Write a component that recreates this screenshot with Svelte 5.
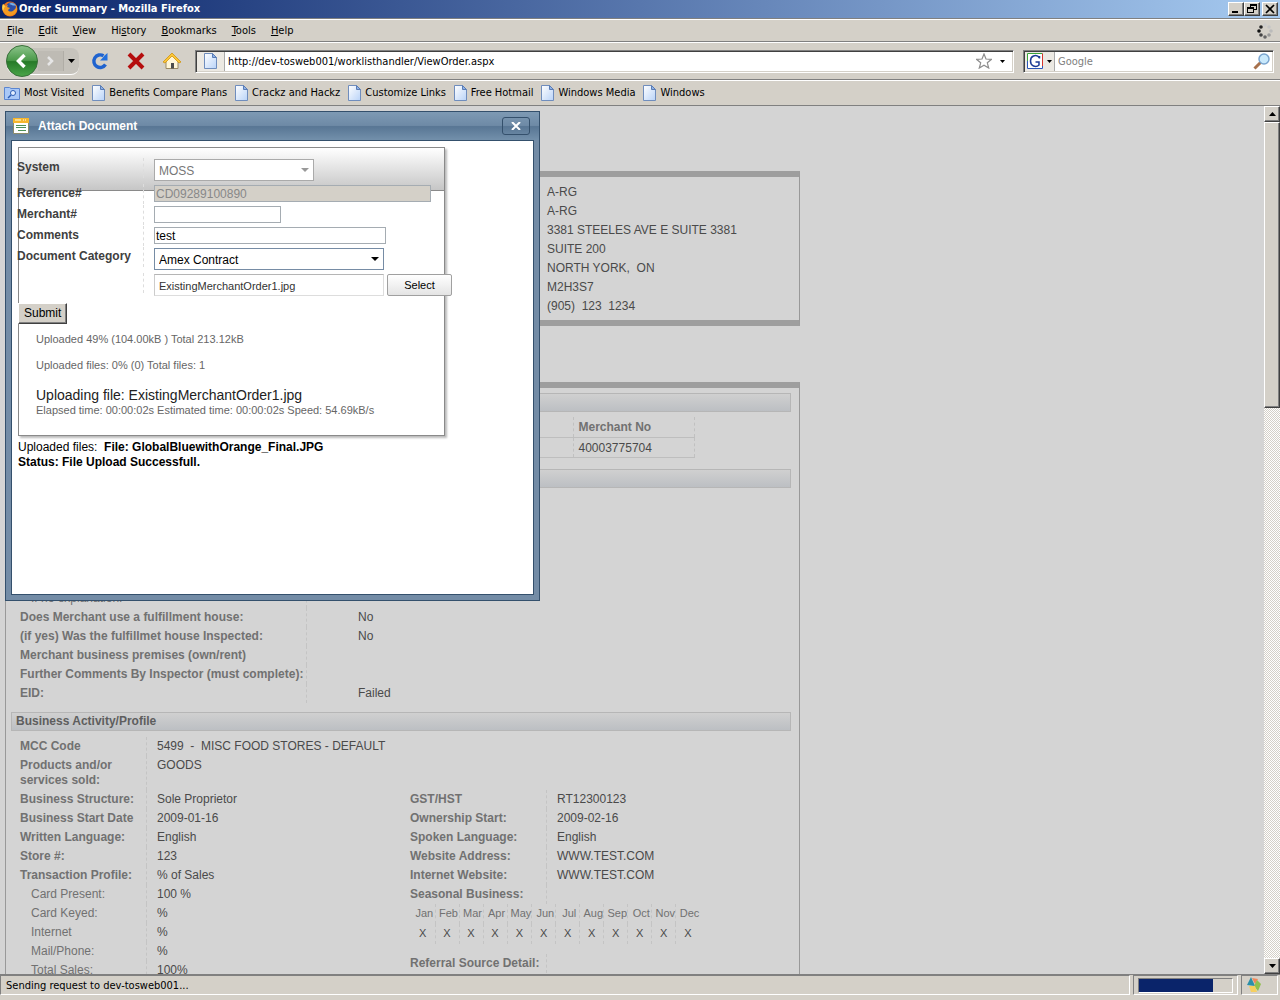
<script>
    const menus = ['File', 'Edit', 'View', 'History', 'Bookmarks', 'Tools', 'Help']
    // index of the underlined accelerator letter
    const accel = [0, 0, 0, 2, 0, 0, 0]
    const bookmarks = ['Benefits Compare Plans', 'Crackz and Hackz', 'Customize Links', 'Free Hotmail', 'Windows Media', 'Windows']
    const address = ['A-RG', 'A-RG', '3381 STEELES AVE E SUITE 3381', 'SUITE 200', 'NORTH YORK,\u00a0 ON', 'M2H3S7', '(905)\u00a0 123\u00a0 1234']
    const inspection = [
        { label: 'If no explanation:', value: '', sub: true },
        { label: 'Does Merchant use a fulfillment house:', value: 'No' },
        { label: '(if yes) Was the fulfillmet house Inspected:', value: 'No' },
        { label: 'Merchant business premises (own/rent)', value: '' },
        { label: 'Further Comments By Inspector (must complete):', value: '' },
        { label: 'EID:', value: 'Failed' }
    ]
    const activity = [
        { label: 'MCC Code', value: '5499\u00a0 -\u00a0 MISC FOOD STORES - DEFAULT' },
        { label: 'Products and/or services sold:', value: 'GOODS' }
    ]
    const business = [
        { label: 'Business Structure:', value: 'Sole Proprietor' },
        { label: 'Business Start Date', value: '2009-01-16' },
        { label: 'Written Language:', value: 'English' },
        { label: 'Store #:', value: '123' },
        { label: 'Transaction Profile:', value: '% of Sales' },
        { label: 'Card Present:', value: '100 %', sub: true },
        { label: 'Card Keyed:', value: '%', sub: true },
        { label: 'Internet', value: '%', sub: true },
        { label: 'Mail/Phone:', value: '%', sub: true },
        { label: 'Total Sales:', value: '100%', sub: true }
    ]
    const ownership = [
        { label: 'GST/HST', value: 'RT12300123' },
        { label: 'Ownership Start:', value: '2009-02-16' },
        { label: 'Spoken Language:', value: 'English' },
        { label: 'Website Address:', value: 'WWW.TEST.COM' },
        { label: 'Internet Website:', value: 'WWW.TEST.COM' },
        { label: 'Seasonal Business:', value: '' }
    ]
    const referral = [{ label: 'Referral Source Detail:', value: '' }]
    const months = ['Jan', 'Feb', 'Mar', 'Apr', 'May', 'Jun', 'Jul', 'Aug', 'Sep', 'Oct', 'Nov', 'Dec']
    const dots = [
        [5, 3, '#222'], [3, 7, '#111'], [5, 11, '#444'], [9, 13, '#666'],
        [13, 11, '#999'], [15, 7, '#bbb'], [13, 3, '#c4c4c4'], [9, 1, '#ccc']
    ]

    let reference = 'CD09289100890'
    let merchant = ''
    let comments = 'test'
    let file = 'ExistingMerchantOrder1.jpg'
    let progress = 80
    let open = true
</script>

{#snippet pageIcon()}
    <svg class="page-icon" width="13" height="16" viewBox="0 0 13 16">
        <defs>
            <linearGradient id="sheet" x1="0" y1="0" x2="1" y2="1">
                <stop offset="0" stop-color="#fff" />
                <stop offset="1" stop-color="#b9d3f8" />
            </linearGradient>
        </defs>
        <path d="M.5.5h8l4 4v11H.5z" fill="url(#sheet)" stroke="#6f8dbd" />
        <path d="M8.5.5v4h4z" fill="#8fb2e8" stroke="#5a7cb4" />
    </svg>
{/snippet}

{#snippet fields(rows)}
    {#each rows as row}
        <div class="row">
            <dt class:sub={row.sub}>{row.label}</dt>
            <dd>{row.value}</dd>
        </div>
    {/each}
{/snippet}

<div class="window">
    <header class="titlebar">
        <svg width="16" height="16" viewBox="0 0 16 16">
            <circle cx="8" cy="8" r="7.500" fill="#e8701a" />
            <circle cx="9" cy="6.500" r="5" fill="#2c4fa8" />
            <path d="M7 3c2-2 6-1 7 2-2-1-3 0-4-1z" fill="#79b4ea" />
            <path d="M1 3l2 2 3-1-1 2 3 1-2 2c1 2 4 2 6 0 2-1 2-3 2-5 2 4 1 8-3 10s-8 0-10-4c-1-2-1-5 0-7z" fill="#f39a22" />
            <path d="M1 3l2 2-2 5c-1-2-1-5 0-7z" fill="#ffd34d" />
        </svg>
        <h1>Order Summary - Mozilla Firefox</h1>
        <div class="winbtns">
            <button aria-label="Minimize"><svg width="12" height="10"><path d="M2 7h6v2H2z" /></svg></button>
            <button aria-label="Restore">
                <svg width="12" height="10"><path d="M4 0h7v6H8v3H1V3h3zM5 2v1h3v2h2V2zM2 5v3h5V5z" fill-rule="evenodd" /></svg>
            </button>
            <button aria-label="Close" class="close"><svg width="12" height="10"><path d="M2 1l8 8M10 1L2 9" stroke="#000" stroke-width="1.700" /></svg></button>
        </div>
    </header>

    <nav class="menubar">
        {#each menus as menu, i}
            <button>{menu.slice(0, accel[i])}<u>{menu[accel[i]]}</u>{menu.slice(accel[i] + 1)}</button>
        {/each}
        <svg class="throbber" width="18" height="16">
            {#each dots as [x, y, fill]}
                <circle cx={x} cy={y + 1} r="1.800" {fill} />
            {/each}
        </svg>
    </nav>

    <div class="toolbar">
        <div class="history">
            <button class="back" aria-label="Back">
                <svg width="32" height="32" viewBox="0 0 32 32">
                    <defs>
                        <linearGradient id="green" x1="0" y1="0" x2="0" y2="1">
                            <stop offset="0" stop-color="#8cc48b" />
                            <stop offset=".48" stop-color="#4b9a4a" />
                            <stop offset=".52" stop-color="#267a28" />
                            <stop offset="1" stop-color="#4aa548" />
                        </linearGradient>
                    </defs>
                    <circle cx="16" cy="16" r="15.500" fill="url(#green)" stroke="#39703a" />
                    <path d="M18.500 10l-6 6 6 6" fill="none" stroke="#fff" stroke-width="3.500" />
                </svg>
            </button>
            <button class="forward" aria-label="Forward">
                <svg width="14" height="14"><path d="M4 3l4 4-4 4" fill="none" stroke="#e6e6e6" stroke-width="2.500" /></svg>
            </button>
            <button class="recent" aria-label="Recent pages"><svg width="7" height="4"><path d="M0 0h7L3.500 4z" /></svg></button>
        </div>
        <button class="tool" aria-label="Reload">
            <svg width="18" height="18" viewBox="0 0 18 18">
                <path d="M14.500 12.500A6.300 6.300 0 1 1 12.500 3.800" fill="none" stroke="#1f63cf" stroke-width="3.400" />
                <path d="M16.500 1v7.500H9l2.500-2.500 2-2.500z" fill="#2270de" />
            </svg>
        </button>
        <button class="tool" aria-label="Stop">
            <svg width="18" height="18" viewBox="0 0 18 18"><path d="M2 2l14 14M16 2L2 16" stroke="#b50d0d" stroke-width="4" /></svg>
        </button>
        <button class="tool" aria-label="Home">
            <svg width="18" height="18" viewBox="0 0 18 18">
                <path d="M3 9l6-6 6 6v7.500H3z" fill="#fff6d8" stroke="#9b8a63" />
                <path d="M0 10L9 1l9 9-2 1-7-7-7 7z" fill="#fbc638" stroke="#cf9310" stroke-width=".8" />
                <path d="M8 11h3v5.500H8z" fill="#4d4d4d" />
            </svg>
        </button>
        <div class="location">
            <span class="favicon">{@render pageIcon()}</span>
            <input aria-label="Location" value="http://dev-tosweb001/worklisthandler/ViewOrder.aspx" />
            <button aria-label="Bookmark this page">
                <svg width="16" height="16" viewBox="0 0 16 16">
                    <path d="M8 1l2 5 5.500.3-4.200 3.500 1.400 5.200L8 12.200 3.300 15l1.400-5.200L.5 6.300 6 6z" fill="#fff" stroke="#8d8d8d" stroke-width="1.200" />
                </svg>
            </button>
            <button aria-label="Show history"><svg width="5" height="3"><path d="M0 0h5L2.500 3z" /></svg></button>
        </div>
        <div class="search">
            <button class="engine" aria-label="Search engine">
                <svg width="16" height="16" viewBox="0 0 16 16">
                    <path d="M0 0h16v16H0z" fill="#fff" />
                    <path d="M.5 8V.5h15" fill="none" stroke="#3aa53a" />
                    <path d="M15.500.5V13" stroke="#d6352b" />
                    <path d="M.5 8v7.500h15V13" fill="none" stroke="#2a55b8" />
                    <path d="M12.500 5.500V3M12.500 5C11 2.500 8.500 2.300 6.500 3 2.500 4.500 2.500 11.500 6.500 13c2 .7 4.500 0 5.500-1V9H8.500" fill="none" stroke="#1b3a94" stroke-width="1.500" />
                </svg>
                <svg width="5" height="3"><path d="M0 0h5L2.500 3z" /></svg>
            </button>
            <input aria-label="Search" placeholder="Google" />
            <button aria-label="Go">
                <svg width="18" height="18" viewBox="0 0 18 18">
                    <path d="M7.500 10.500l-6 6" stroke="#a7714d" stroke-width="3" />
                    <circle cx="11" cy="7" r="5" fill="#c9e9fc" stroke="#7aa5cf" stroke-width="1.500" />
                </svg>
            </button>
        </div>
    </div>

    <nav class="bookmarks">
        <a href="#most-visited">
            <svg width="16" height="14" viewBox="0 0 16 14">
                <path d="M.5 1.500h5l1.500 1h8.500v11H.5z" fill="#a9c8f7" stroke="#5c86cf" />
                <circle cx="9" cy="7" r="2.500" fill="#e5f0ff" stroke="#2c5db4" />
                <path d="M7 9l-3 3" stroke="#2c5db4" stroke-width="1.500" />
            </svg>
            Most Visited
        </a>
        {#each bookmarks as name}
            <a href="#bookmark">{@render pageIcon()}{name}</a>
        {/each}
    </nav>

    <div class="viewport">
        <main>
            <section class="panel address">
                {#each address as line}
                    <p>{line}</p>
                {/each}
            </section>

            <section class="panel">
                <div class="bar"></div>
                <table class="merchant">
                    <thead><tr><th class="wide"></th><th>Merchant No</th></tr></thead>
                    <tbody><tr><td class="wide"></td><td>40003775704</td></tr></tbody>
                </table>
                <div class="bar"></div>
                <dl class="inspection">{@render fields(inspection)}</dl>
                <h2 class="bar">Business Activity/Profile</h2>
                <dl class="activity">{@render fields(activity)}</dl>
                <div class="columns">
                    <dl>{@render fields(business)}</dl>
                    <div>
                        <dl>{@render fields(ownership)}</dl>
                        <table class="months">
                            <thead><tr>{#each months as month}<th>{month}</th>{/each}</tr></thead>
                            <tbody><tr>{#each months as month}<td>X</td>{/each}</tr></tbody>
                        </table>
                        <dl>{@render fields(referral)}</dl>
                    </div>
                </div>
            </section>

            {#if open}
                <div class="dialog" role="dialog" aria-labelledby="dialog-title">
                    <div class="dialog-title">
                        <svg width="16" height="16" viewBox="0 0 16 16">
                            <path d="M.5.5h15v15H.5z" fill="#fff" stroke="#8b8b6a" />
                            <path d="M0 0h16v5H0z" fill="#f6b62c" />
                            <path d="M2 2h6" stroke="#ffe9a8" stroke-width="1.500" />
                            <path d="M10 2h1m1 0h1" stroke="#fff" />
                            <path d="M3 7.500h10M3 9.500h10M5 12.500h8" stroke="#4d9156" />
                        </svg>
                        <h2 id="dialog-title">Attach Document</h2>
                        <button aria-label="Close" on:click={() => (open = false)}>
                            <svg width="10" height="8"><path d="M1 0l8 8M9 0L1 8" stroke="#fff" stroke-width="2" /></svg>
                        </button>
                    </div>
                    <div class="dialog-body">
                        <form on:submit|preventDefault>
                            <div class="field tall">
                                <label for="system">System</label>
                                <span class="select off w160">
                                    <select id="system" disabled><option>MOSS</option></select>
                                </span>
                            </div>
                            <div class="field">
                                <label for="reference">Reference#</label>
                                <input class="w277" id="reference" disabled bind:value={reference} />
                            </div>
                            <div class="field">
                                <label for="merchant">Merchant#</label>
                                <input class="w127" id="merchant" bind:value={merchant} />
                            </div>
                            <div class="field">
                                <label for="comments">Comments</label>
                                <input class="w232" id="comments" bind:value={comments} />
                            </div>
                            <div class="field tall">
                                <label for="category">Document Category</label>
                                <span class="select w230">
                                    <select id="category"><option>Amex Contract</option></select>
                                </span>
                            </div>
                            <div class="field tall">
                                <label for="file"></label>
                                <input class="file w230" id="file" aria-label="File" readonly value={file} />
                                <button class="pick" type="button">Select</button>
                            </div>
                            <button class="submit">Submit</button>
                            <div class="upload">
                                <p>Uploaded 49% (104.00kB ) Total 213.12kB</p>
                                <p>Uploaded files: 0% (0) Total files: 1</p>
                                <p class="current">Uploading file: {file}</p>
                                <p>Elapsed time: 00:00:02s Estimated time: 00:00:02s Speed: 54.69kB/s</p>
                            </div>
                        </form>
                        <p class="result">Uploaded files: &nbsp;<b>File: GlobalBluewithOrange_Final.JPG<br />Status: File Upload Successfull.</b></p>
                    </div>
                </div>
            {/if}
        </main>

        <div class="scrollbar">
            <button aria-label="Scroll up"><svg width="7" height="4"><path d="M0 4h7L3.500 0z" /></svg></button>
            <div class="thumb"></div>
            <button aria-label="Scroll down"><svg width="7" height="4"><path d="M0 0h7L3.500 4z" /></svg></button>
        </div>
    </div>

    <footer class="statusbar">
        <span class="message">Sending request to dev-tosweb001...</span>
        <span class="cell"><span class="progress"><span style="width: {progress}%"></span></span></span>
        <span class="cell last">
            <svg width="16" height="16" viewBox="0 0 16 16">
                <path d="M5 0l4 9-8-1z" fill="#2b8fa8" />
                <path d="M6 1l6 1-3 5z" fill="#f0875a" />
                <path d="M11 3l4 4-3 7-4-5z" fill="#8fc04e" />
                <path d="M3 9l6 0 2 6-6 0z" fill="#f6cf5e" />
            </svg>
        </span>
    </footer>
</div>

<style>
    :global(body) {
        margin: 0;
        background: #d4d0c8;
    }
    .window {
        display: flex;
        flex-direction: column;
        height: 100vh;
        overflow: hidden;
        background: #d4d0c8;
        color: #000;
        font: 11px/14px 'DejaVu Sans Condensed', 'DejaVu Sans', sans-serif;
    }
    h1, h2, p, dl, dd {
        margin: 0;
        font-size: inherit;
    }
    button, input, select {
        box-sizing: border-box;
        margin: 0;
        padding: 0;
        border: 0;
        border-radius: 0;
        background: none;
        color: inherit;
        font: inherit;
        outline: none;
    }
    button {
        display: flex;
        align-items: center;
        justify-content: center;
    }
    svg {
        display: block;
        flex: none;
    }

    /* browser chrome */
    .titlebar {
        display: flex;
        align-items: center;
        gap: 1px;
        height: 18px;
        padding: 0 2px;
        background: linear-gradient(90deg, #0a246a, #a6caf0);
        border-bottom: 1px solid #808080;
        color: #fff;
    }
    .titlebar h1 {
        flex: 1;
    }
    .winbtns {
        display: flex;
    }
    .winbtns button, .scrollbar button, .thumb {
        box-sizing: border-box;
        background: #d4d0c8;
        border: 1px solid;
        border-color: #fff #404040 #404040 #fff;
        box-shadow: inset -1px -1px #808080;
    }
    .winbtns button {
        width: 16px;
        height: 14px;
    }
    .winbtns .close {
        margin-left: 2px;
    }
    .menubar {
        display: flex;
        align-items: center;
        gap: 15px;
        height: 21px;
        padding: 0 6px 0 7px;
        border-top: 1px solid #fff;
        border-bottom: 1px solid #808080;
    }
    .menubar button {
        display: block;
    }
    .throbber {
        margin-left: auto;
    }
    .toolbar {
        display: flex;
        align-items: center;
        height: 36px;
        padding: 0 6px;
        border-top: 1px solid #fff;
        border-bottom: 1px solid #808080;
    }
    .history {
        display: flex;
        align-items: center;
        height: 26px;
        margin-right: 12px;
        border-bottom: 1px solid #fff;
        border-radius: 12px 8px 8px 12px;
        background: #c6c3bc;
    }
    .forward {
        width: 26px;
        height: 20px;
        border-right: 1px solid #b0ada6;
        background: #bebbb4;
    }
    .recent {
        width: 15px;
        height: 20px;
    }
    .tool {
        width: 18px;
        margin-right: 18px;
    }
    .location, .search {
        display: flex;
        align-items: center;
        box-sizing: border-box;
        height: 23px;
        border: 1px solid;
        border-color: #808080 #fff #fff #808080;
        box-shadow: inset 1px 1px #404040, inset -1px -1px #d4d0c8;
        background: #fff;
    }
    .location {
        flex: 1;
        margin: 0 9px 0 -4px;
    }
    .location input, .search input {
        flex: 1;
        min-width: 0;
        padding: 2px 0 0 3px;
    }
    .location button {
        margin-right: 8px;
    }
    .search {
        width: 251px;
    }
    .search button {
        margin-right: 2px;
    }
    .search input::placeholder {
        color: #808080;
        opacity: 1;
    }
    .favicon, .search .engine {
        display: flex;
        align-items: center;
        justify-content: center;
        gap: 4px;
        box-sizing: border-box;
        width: 28px;
        height: 19px;
        margin: 0 0 0 1px;
        border-right: 1px solid #aaa;
        background: #ece9e3;
    }
    .search .engine {
        width: 30px;
    }
    .bookmarks {
        display: flex;
        align-items: center;
        gap: 8px;
        height: 24px;
        padding-left: 4px;
        border-top: 1px solid #fff;
        border-bottom: 1px solid #808080;
    }
    .bookmarks a {
        display: flex;
        align-items: center;
        gap: 4px;
        color: #000;
        text-decoration: none;
    }

    /* page */
    .viewport {
        display: flex;
        flex: 1;
        min-height: 0;
    }
    main {
        position: relative;
        flex: 1;
        box-sizing: border-box;
        padding: 65px 5px 0;
        overflow: hidden;
        background: #d4d4d4;
        color: #4a4a4a;
        font: 12px/15px 'Liberation Sans', Arial, sans-serif;
    }
    .panel {
        box-sizing: border-box;
        max-width: 795px;
        margin-bottom: 56px;
        padding: 5px 8px 5px 5px;
        border: 1px solid #999;
        border-top: 6px solid #9e9e9e;
    }
    .address {
        padding: 6px 8px 4px 541px;
        border-bottom: 6px solid #9e9e9e;
    }
    .address p {
        padding: 2px 0;
    }
    .bar {
        box-sizing: border-box;
        height: 19px;
        padding: 1px 4px;
        border: 1px solid #b6b6b6;
        background: linear-gradient(#d0d0d0, #bcbfc3);
        color: #5e5e5e;
    }
    table {
        border-collapse: collapse;
    }
    th {
        color: #717171;
        text-align: left;
    }
    .merchant {
        margin: 5px 0 11px 9px;
    }
    .merchant th, .merchant td {
        box-sizing: border-box;
        width: 121px;
        height: 20px;
        padding: 2px 5px 0;
        border-right: 1px dashed #c0c0c0;
        border-bottom: 1px solid #bebebe;
    }
    .merchant .wide {
        width: 553px;
    }
    dl {
        padding-left: 9px;
    }
    .row {
        display: flex;
    }
    dt {
        box-sizing: border-box;
        width: 127px;
        padding: 2px 8px 2px 0;
        border-right: 1px dashed #c4c4c4;
        color: #717171;
        font-weight: bold;
    }
    dt.sub {
        padding-left: 11px;
        font-weight: normal;
    }
    dd {
        padding: 2px 10px;
    }
    .inspection {
        margin: 101px 0 9px;
    }
    .inspection dt {
        width: 287px;
        padding-right: 0;
        white-space: nowrap;
    }
    .inspection dd {
        padding-left: 51px;
    }
    .activity {
        margin-top: 6px;
    }
    .columns {
        display: flex;
    }
    .columns > dl {
        box-sizing: border-box;
        width: 390px;
    }
    .columns div dt {
        width: 137px;
        padding-right: 0;
    }
    .columns > dl dt {
        width: 127px;
    }
    .months {
        margin: 0 0 10px 10px;
        font-size: 11px;
    }
    .months th, .months td {
        box-sizing: border-box;
        width: 24px;
        min-width: 24px;
        height: 20px;
        padding: 0;
        border-right: 1px dashed #c4c4c4;
        font-weight: normal;
        text-align: center;
    }
    .months th {
        padding-left: 3px;
    }
    .months th:last-child, .months td:last-child {
        border-right: 0;
    }

    /* dialog */
    .dialog {
        position: absolute;
        top: 5px;
        left: 5px;
        display: flex;
        flex-direction: column;
        box-sizing: border-box;
        width: 535px;
        height: 490px;
        padding: 0 5px 5px;
        border: 1px solid #34506c;
        background: #738ca6;
        color: #000;
    }
    .dialog-title {
        display: flex;
        align-items: center;
        gap: 9px;
        height: 28px;
        margin: 0 -5px;
        padding: 0 9px 0 7px;
        background: linear-gradient(#7e9ab4, #6e8aa6 48%, #587694 52%, #7390ab);
        color: #fff;
    }
    .dialog-title h2 {
        flex: 1;
    }
    .dialog-title button {
        width: 28px;
        height: 18px;
        border: 1px solid #34506c;
        border-radius: 3px;
    }
    .dialog-body {
        flex: 1;
        padding: 6px;
        border: 1px solid #34506c;
        background: #fff;
    }
    form {
        box-sizing: border-box;
        width: 427px;
        height: 289px;
        padding-top: 10px;
        border: 1px solid #8a8a8a;
        box-shadow: 2px 2px 2px #bbb;
        background: linear-gradient(#fff, #c6c6c6) 0 0 / 100% 42px no-repeat, linear-gradient(#8a8a8a, #8a8a8a) 0 42px / 100% 1px no-repeat, #fff;
    }
    .field {
        display: flex;
        align-items: flex-start;
        height: 21px;
        margin-left: -2px;
    }
    .tall {
        height: 26px;
    }
    .field label {
        flex: none;
        box-sizing: border-box;
        width: 127px;
        height: 20px;
        margin-right: 10px;
        padding-top: 2px;
        border-right: 1px dashed #ddd;
        color: #404040;
        font-weight: bold;
    }
    .field input {
        flex: none;
        height: 17px;
        margin-top: 1px;
        padding: 0 1px;
        border: 1px solid #a5acb2;
        background: #fff;
    }
    .field input:disabled {
        background: #d4d0c8;
        color: #888;
    }
    .select {
        position: relative;
        margin-top: 1px;
    }
    .select select {
        appearance: none;
        width: 100%;
        height: 22px;
        padding: 3px 4px 0;
        border: 1px solid #768ca5;
        background: #fff;
    }
    .select select:disabled {
        border-color: #aaa;
        color: #777;
        opacity: 1;
    }
    .select::after {
        content: '';
        position: absolute;
        top: 9px;
        right: 5px;
        border: 4px solid transparent;
        border-top-color: #000;
        border-bottom: 0;
        pointer-events: none;
    }
    .select.off::after {
        border-top-color: #999;
    }
    .field .w127 { width: 127px; }
    .field .w160 { width: 160px; }
    .field .w230 { width: 230px; }
    .field .w232 { width: 232px; }
    .field .w277 { width: 277px; }
    .field .file {
        height: 22px;
        padding: 2px 4px 0;
        border-color: #b5b5b5 #ddd #ddd #ccc;
        color: #333;
        font-size: 11px;
    }
    .pick {
        flex: none;
        width: 65px;
        height: 22px;
        margin: 1px 0 0 3px;
        border: 1px solid #a0a0a0;
        border-radius: 2px;
        background: linear-gradient(#fff, #e4e4e4);
        font-size: 11px;
    }
    .submit {
        height: 21px;
        margin-top: 4px;
        margin-left: -1px;
        padding: 0 5px;
        border: 1px solid;
        border-color: #fff #404040 #404040 #fff;
        box-shadow: inset -1px -1px #808080;
        background: #d4d0c8;
    }
    .upload {
        padding: 8px 17px;
        color: #666;
        font-size: 11px;
    }
    .upload p + p {
        margin-top: 11px;
    }
    .upload .current {
        margin-top: 14px;
        color: #222;
        font-size: 14px;
        line-height: 16px;
    }
    .upload .current + p {
        margin-top: 0;
    }
    .result {
        padding-top: 4px;
    }

    .scrollbar {
        display: flex;
        flex-direction: column;
        width: 16px;
        background: repeating-conic-gradient(#fff 0 25%, #d4d0c8 0 50%) 0 0 / 2px 2px;
    }
    .scrollbar button {
        height: 16px;
    }
    .thumb {
        height: 33%;
        margin-bottom: auto;
    }
    .statusbar {
        display: flex;
        gap: 3px;
        height: 20px;
        padding: 0 2px 5px 0;
        border-top: 1px solid #808080;
    }
    .statusbar > span {
        display: flex;
        align-items: center;
        box-sizing: border-box;
        border: 1px solid;
        border-color: #808080 #fff #fff #808080;
    }
    .statusbar .message {
        flex: 1;
        padding-left: 5px;
        padding-top: 2px;
    }
    .statusbar .cell {
        width: 105px;
        padding: 0 4px;
    }
    .statusbar .last {
        width: 37px;
    }
    .progress {
        flex: 1;
        height: 13px;
        border: 1px solid;
        border-color: #808080 #fff #fff #808080;
    }
    .progress span {
        display: block;
        height: 100%;
        background: #0a246a;
    }
</style>
